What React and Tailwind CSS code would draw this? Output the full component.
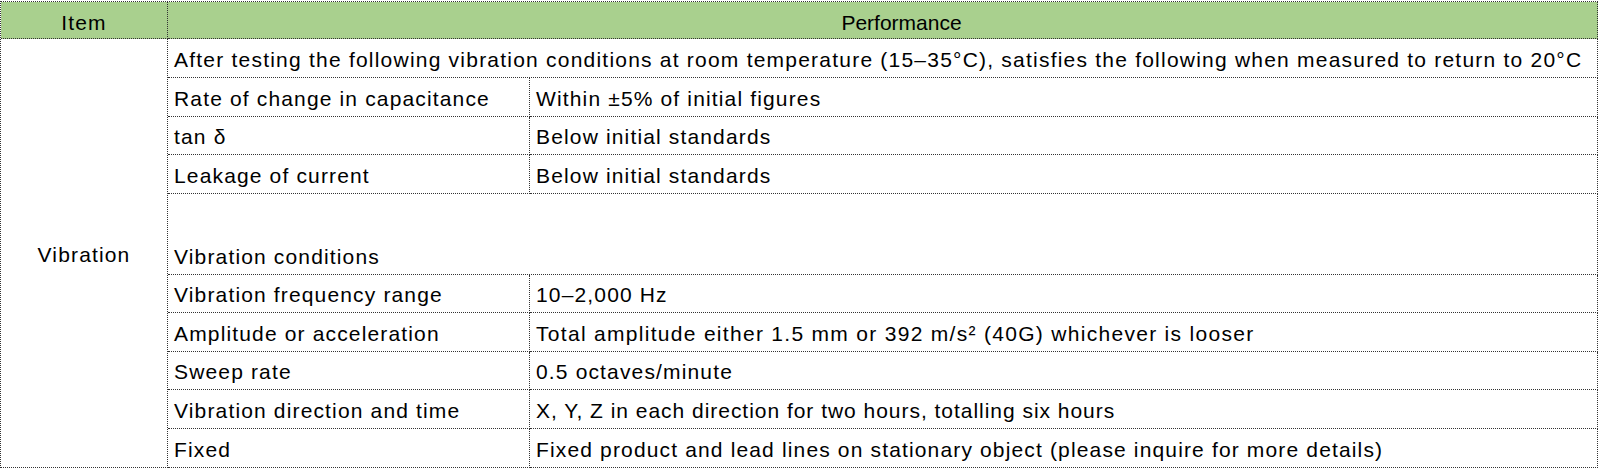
import React from "react";

const B = "border-r border-b border-dotted border-[#333]";

function Cell({ children, className = "" }) {
  return (
    <div className={`${B} flex items-end pl-[6px] pb-[5px] leading-[24px] whitespace-nowrap overflow-hidden ${className}`}>
      {children}
    </div>
  );
}

export default function App() {
  const top = [
    ["Rate of change in capacitance", "Within ±5% of initial figures"],
    ["tan δ", "Below initial standards"],
    ["Leakage of current", "Below initial standards"],
  ];
  const bottom = [
    ["Vibration frequency range", "10–2,000 Hz", ""],
    ["Amplitude or acceleration", "Total amplitude either 1.5 mm or 392 m/s² (40G) whichever is looser", "tracking-[1.3px]"],
    ["Sweep rate", "0.5 octaves/minute", ""],
    ["Vibration direction and time", "X, Y, Z in each direction for two hours, totalling six hours", "tracking-[0.97px]"],
    ["Fixed", "Fixed product and lead lines on stationary object (please inquire for more details)", ""],
  ];
  return (
    <div className="w-[1600px] h-[469px] bg-white pt-px" style={{ fontFamily: '"Liberation Sans", Arial, sans-serif' }}>
      <div className="w-[1598px] grid grid-cols-[167px_362px_1fr] grid-rows-[37px_39px_39px_38px_39px_81px_38px_39px_38px_39px_39px] border-l border-t border-dotted border-[#333] text-[21px] tracking-[1.15px] text-black">
        <div className={`${B} bg-[#A9D08E] flex items-end justify-center pb-[3px] leading-[24px]`}>Item</div>
        <div className={`${B} bg-[#A9D08E] col-span-2 flex items-end justify-center pl-[38px] pb-[3px] leading-[24px] tracking-normal`}>Performance</div>
        <div className={`${B} row-span-10 flex items-center justify-center leading-[24px] pt-[4px]`}>Vibration</div>
        <Cell className="col-span-2 tracking-[1.22px]">After testing the following vibration conditions at room temperature (15–35°C), satisfies the following when measured to return to 20°C</Cell>
        {top.map(([a, b]) => (
          <React.Fragment key={a}>
            <Cell>{a}</Cell>
            <Cell>{b}</Cell>
          </React.Fragment>
        ))}
        <Cell className="col-span-2">Vibration conditions</Cell>
        {bottom.map(([a, b, t]) => (
          <React.Fragment key={a}>
            <Cell>{a}</Cell>
            <Cell className={t}>{b}</Cell>
          </React.Fragment>
        ))}
      </div>
    </div>
  );
}
